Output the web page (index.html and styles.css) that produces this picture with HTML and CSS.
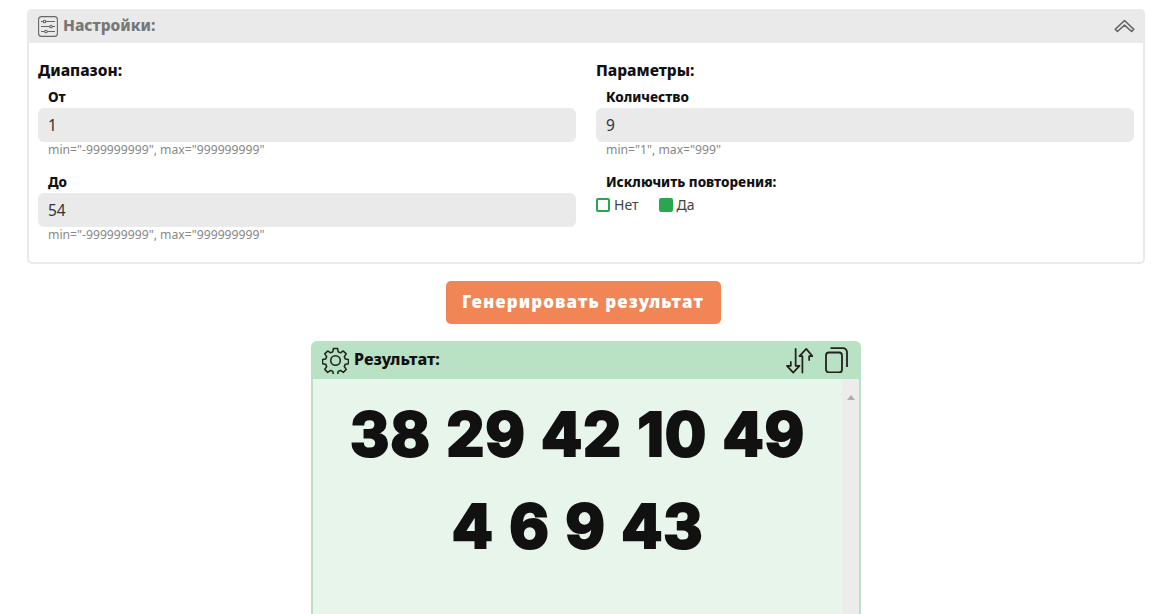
FILE: index.html
```html
<!DOCTYPE html>
<html lang="ru">
<head>
<meta charset="utf-8">
<title>Генератор</title>
<link rel="stylesheet" href="styles.css">
</head>
<body>
<main class="page">
  <section class="panel">
    <header class="panel-head">
      <div class="head-title">
        <svg class="ico-set" viewBox="0 0 20 21" fill="none" stroke="#666" stroke-width="1.1"><rect x=".6" y=".6" width="18.800" height="19.800" rx="3"/><path d="M3 5.500h14M3 10.500h14M3 15.500h14"/><circle cx="6.500" cy="5.500" r="1.300" fill="#eaeaea"/><circle cx="13" cy="10.500" r="1.300" fill="#eaeaea"/><circle cx="8" cy="15.500" r="1.300" fill="#eaeaea"/></svg>
        <span>Настройки:</span>
      </div>
      <svg class="ico-up" viewBox="0 0 21 14" fill="none" stroke="#666" stroke-width="1.600" stroke-linejoin="round"><path d="M1.200 10.300 10.500 1.500l9.300 8.800-2.200 2.200-7.100-6.300-7.100 6.300z"/></svg>
    </header>
    <div class="panel-body">
      <div class="col">
        <h3 class="col-title">Диапазон:</h3>
        <label class="lbl">От</label>
        <div class="input">1</div>
        <p class="hint">min="-999999999", max="999999999"</p>
        <label class="lbl lbl-next">До</label>
        <div class="input">54</div>
        <p class="hint">min="-999999999", max="999999999"</p>
      </div>
      <div class="col">
        <h3 class="col-title">Параметры:</h3>
        <label class="lbl">Количество</label>
        <div class="input">9</div>
        <p class="hint">min="1", max="999"</p>
        <label class="lbl lbl-next">Исключить повторения:</label>
        <div class="radios">
          <span class="radio"><i class="box"></i>Нет</span>
          <span class="radio"><i class="box on"></i>Да</span>
        </div>
      </div>
    </div>
  </section>
  <div class="action"><button class="go">Генерировать результат</button></div>
  <section class="result">
    <header class="result-head">
      <div class="result-title">
        <svg class="ico-gear" viewBox="0 0 26 26" fill="none" stroke="#222" stroke-width="1.500" stroke-linejoin="round"><circle cx="13" cy="13" r="4.600"/><path d="M11 1.500h4l.6 3.200 2.200.9 2.700-1.800 2.800 2.800-1.800 2.700.9 2.200 3.100.6v4l-3.100.6-.9 2.200 1.800 2.700-2.800 2.800-2.700-1.800-2.200.9-.6 3.200h-4l-.6-3.200-2.200-.9-2.700 1.800-2.800-2.800 1.800-2.700-.9-2.200-3.100-.6v-4l3.100-.6.9-2.200-1.800-2.700 2.800-2.800 2.700 1.800 2.200-.9z"/></svg>
        <span>Результат:</span>
      </div>
      <div class="result-tools">
        <svg class="ico-sort" viewBox="0 0 28 27" fill="none" stroke="#222" stroke-width="1.800" stroke-linejoin="round" stroke-linecap="round"><path d="M10 1.500V19h4l-6.500 7L1 19h4v-4"/><path d="M17 26V9h-3l7-7.500L27.500 9H24v4"/></svg>
        <svg class="ico-copy" viewBox="0 0 23 26" fill="none" stroke="#222" stroke-width="1.800"><rect x="1" y="5.500" width="16" height="20" rx="3"/><path d="M5.500 1.200H18a4 4 0 0 1 4 4V20"/></svg>
      </div>
    </header>
    <div class="result-body">
      <div class="numbers">
        <p class="line">38 29 42 10 49</p>
        <p class="line">4 6 9 43</p>
      </div>
      <div class="scrollbar"><i class="arrow"></i></div>
    </div>
  </section>
</main>
</body>
</html>
```
FILE: styles.css
```css
* { box-sizing: border-box; }
html, body { margin: 0; height: 100%; overflow: hidden; background: #fff; }
body { font-family: "Noto Sans", "Open Sans", sans-serif; color: #111; }
.page { padding: 9px 13px 0 27px; }

.panel { border: 2px solid #eaeaea; border-top: 0; border-radius: 5px; height: 255px; }
.panel-head { height: 34px; margin: 0 -2px; background: #eaeaea; border-radius: 5px 5px 0 0; display: flex; align-items: center; justify-content: space-between; padding: 0 10px 0 11px; }
.head-title { display: flex; align-items: center; gap: 5px; font-size: 15.500px; font-weight: 800; color: #777; }
.head-title span { padding-bottom: 2px; }
.ico-set { width: 20px; height: 21px; }
.ico-up { width: 21px; height: 14px; }

.panel-body { display: grid; grid-template-columns: 538px 538px; gap: 20px; padding: 17px 9px 0; }
.col-title { margin: 0; font-size: 15.500px; line-height: 20px; font-weight: 800; color: #111; }
.lbl { display: block; margin: 8px 0 0 10px; font-size: 13.500px; line-height: 18px; font-weight: 800; color: #111; height: 18px; }
.lbl-next { margin-top: 15px; }
.input { height: 34px; margin-top: 2px; background: #eaeaea; border-radius: 6px; padding: 0 10px; font-size: 15.500px; line-height: 34px; color: #333; }
.hint { margin: 0 0 0 10px; font-size: 12.200px; line-height: 16px; color: #888; }

.radios { display: flex; gap: 20px; margin-top: 6px; }
.radio { display: flex; align-items: center; gap: 4px; font-size: 14px; line-height: 16px; color: #444; }
.box { display: block; width: 14px; height: 14px; border: 2px solid #28a650; border-radius: 2px; }
.box.on { background: #28a650; }

.action { display: flex; justify-content: center; margin-top: 17px; padding-right: 6px; }
.go { width: 275px; height: 43px; padding: 0 0 2px; border: 0; border-radius: 5px; background: #f28555; color: #fff; font-family: inherit; font-size: 17px; font-weight: 900; letter-spacing: 1.100px; }

.result { width: 550px; margin: 17px 0 0 284px; }
.result-head { height: 38px; background: #b9e1c3; border-radius: 6px 6px 0 0; display: flex; align-items: center; justify-content: space-between; padding: 0 13px 0 11px; }
.result-title { display: flex; align-items: center; gap: 5px; font-size: 16px; font-weight: 800; color: #111; }
.result-title span { padding-bottom: 2px; }
.ico-gear { width: 27px; height: 27px; }
.result-tools { display: flex; align-items: center; gap: 12px; }
.ico-sort { width: 27px; height: 27px; }
.ico-copy { width: 23px; height: 26px; }

.result-body { height: 300px; display: flex; background: #e8f5eb; border: 2px solid #b9e1c3; border-top: 0; border-bottom: 0; }
.numbers { flex: 1; text-align: center; padding-top: 9px; }
.line { margin: 0; font-family: "Inter", "Noto Sans", sans-serif; font-size: 60px; line-height: 92px; font-weight: 800; color: #111; letter-spacing: .7px; word-spacing: 1.700px; -webkit-text-stroke: 2px #111; }
.scrollbar { width: 17px; background: #ececec; display: flex; justify-content: center; padding-top: 16px; }
.arrow { display: block; width: 0; height: 0; border: 4px solid transparent; border-top: 0; border-bottom: 5px solid #b5a9b5; }
```
